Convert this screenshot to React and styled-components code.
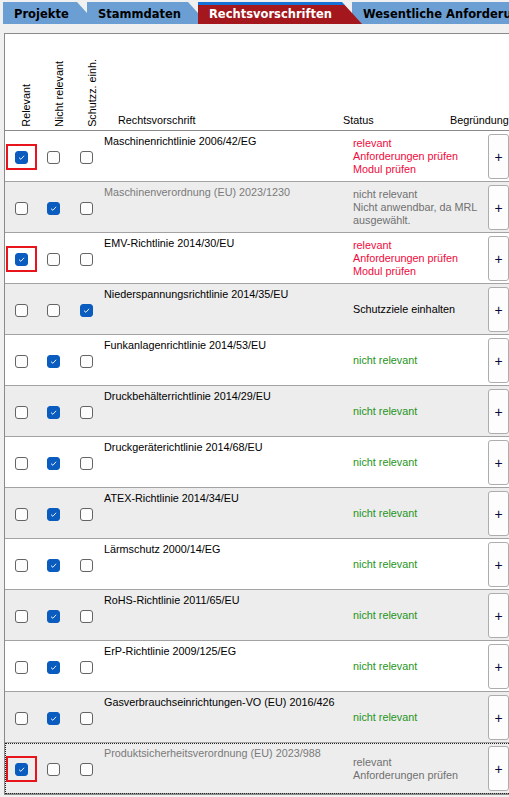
import styled, { createGlobalStyle } from 'styled-components';

const GlobalStyle = createGlobalStyle`
  html, body {
    margin: 0;
    background: #f0f0f0;
    overflow: hidden;
  }
  body {
    font-family: "Liberation Sans", Arial, sans-serif;
    font-size: 10.8px;
    color: #000;
  }
`;

const Page = styled.div`
  width: 640px;
  padding-top: 2px;
`;

const TabStrip = styled.div`
  display: flex;
  padding-left: 3px;
  height: 22px;
`;

const Tab = styled.div`
  position: relative;
  z-index: ${p => (p.$active ? 20 : p.$index)};
  flex: none;
  width: ${p => p.$width}px;
  height: 22px;
  margin-right: -10px;
  padding: 1px 0 0 11px;
  box-sizing: border-box;
  display: flex;
  align-items: center;
  font-family: "DejaVu Sans", Verdana, sans-serif;
  font-weight: bold;
  font-size: 11.5px;
  white-space: nowrap;
  color: ${p => (p.$active ? '#fff' : '#000')};
  background: ${p => (p.$active ? 'linear-gradient(#1672d6 0 3px, #a3171d 3px)' : '#6b9fd3')};
  clip-path: polygon(0 0, calc(100% - 20px) 0, 100% 100%, 0 100%);
`;

const Panel = styled.div`
  margin: 9px 0 0 4px;
  border: 1px solid #8a8a8a;
  background: #fff;
`;

const HeaderRow = styled.div`
  display: grid;
  grid-template-columns: 32px 33px 32px 241px 107px 1fr;
  height: 96px;
  border-bottom: 1px solid #8a8a8a;
`;

const HeaderCell = styled.div`
  display: flex;
  align-items: flex-end;
  padding: 0 0 3px ${p => p.$indent || 0}px;
  line-height: 13px;
  white-space: nowrap;
`;

const VLabel = styled.span`
  writing-mode: vertical-rl;
  transform: rotate(180deg);
  line-height: 13px;
  white-space: nowrap;
`;

const Row = styled.div`
  display: grid;
  grid-template-columns: 32px 33px 32px 249px 135px 1fr;
  height: 50px;
  border-bottom: 1px solid #a3a3a3;
  background: ${p => (p.$shaded ? '#ededed' : '#fff')};
  outline: ${p => (p.$focused ? '1px dotted #222' : 'none')};
  outline-offset: -1px;
`;

const BoxCell = styled.div`
  display: flex;
  align-items: center;
  justify-content: center;
  padding-top: 1px;
`;

const Mark = styled.div`
  display: flex;
  padding: 5px 7px 4px;
  border: 2px solid ${p => (p.$on ? '#e8141c' : 'transparent')};
`;

const Box = styled.span`
  width: 13px;
  height: 13px;
  box-sizing: border-box;
  border-radius: 3px;
  border: 1px solid ${p => (p.$checked ? '#0b5cbf' : '#646464')};
  background: ${p => (p.$checked ? '#0b5cbf' : '#fdfdfd')};
  display: flex;
  align-items: center;
  justify-content: center;

  & > svg {
    width: 11px;
    height: 11px;
  }
`;

const Name = styled.div`
  padding: 4px 0 0 2px;
  line-height: 13px;
  white-space: nowrap;
  color: ${p => (p.$muted ? '#7a7a7a' : '#000')};
`;

const Status = styled.div`
  align-self: center;
  padding: 1px 0 0 2px;
  line-height: 13px;
  white-space: nowrap;
  color: ${p => p.$color};
`;

const ButtonCell = styled.div`
  display: flex;
  padding: 3px 0 2px 2px;
`;

const PlusButton = styled.button`
  width: 21px;
  height: 100%;
  padding: 0;
  border: 1px solid #adadad;
  border-radius: 3px;
  background: #fdfdfd;
  font-family: "Liberation Sans", Arial, sans-serif;
  font-size: 14px;
  color: #0a0a3a;
`;

const tones = {
  red: '#f00a3c',
  green: '#1f9420',
  grey: '#707070',
  black: '#000',
};

const rows = [
  { name: 'Maschinenrichtlinie 2006/42/EG', checks: [1, 0, 0], mark: true, tone: 'red', status: ['relevant', 'Anforderungen prüfen', 'Modul prüfen'] },
  { name: 'Maschinenverordnung (EU) 2023/1230', muted: true, checks: [0, 1, 0], tone: 'grey', status: ['nicht relevant', 'Nicht anwendbar, da MRL', 'ausgewählt.'] },
  { name: 'EMV-Richtlinie 2014/30/EU', checks: [1, 0, 0], mark: true, tone: 'red', status: ['relevant', 'Anforderungen prüfen', 'Modul prüfen'] },
  { name: 'Niederspannungsrichtlinie 2014/35/EU', checks: [0, 0, 1], tone: 'black', status: ['Schutzziele einhalten'] },
  { name: 'Funkanlagenrichtlinie 2014/53/EU', checks: [0, 1, 0], tone: 'green', status: ['nicht relevant'] },
  { name: 'Druckbehälterrichtlinie 2014/29/EU', checks: [0, 1, 0], tone: 'green', status: ['nicht relevant'] },
  { name: 'Druckgeräterichtlinie 2014/68/EU', checks: [0, 1, 0], tone: 'green', status: ['nicht relevant'] },
  { name: 'ATEX-Richtlinie 2014/34/EU', checks: [0, 1, 0], tone: 'green', status: ['nicht relevant'] },
  { name: 'Lärmschutz 2000/14/EG', checks: [0, 1, 0], tone: 'green', status: ['nicht relevant'] },
  { name: 'RoHS-Richtlinie 2011/65/EU', checks: [0, 1, 0], tone: 'green', status: ['nicht relevant'] },
  { name: 'ErP-Richtlinie 2009/125/EG', checks: [0, 1, 0], tone: 'green', status: ['nicht relevant'] },
  { name: 'Gasverbrauchseinrichtungen-VO (EU) 2016/426', checks: [0, 1, 0], tone: 'green', status: ['nicht relevant'] },
  { name: 'Produktsicherheitsverordnung (EU) 2023/988', muted: true, checks: [1, 0, 0], mark: true, tone: 'grey', status: ['relevant', 'Anforderungen prüfen'], shaded: true, focused: true },
];

const Check = ({ checked }) => (
  <Box $checked={checked}>
    {checked && (
      <svg viewBox="0 0 11 11">
        <path d="M3.3 5.9 L4.9 7.3 L7.8 4.1" fill="none" stroke="#fff" strokeWidth="0.9" strokeLinecap="round" strokeLinejoin="round" />
      </svg>
    )}
  </Box>
);

const tabs = [
  { label: 'Projekte', width: 94 },
  { label: 'Stammdaten', width: 121 },
  { label: 'Rechtsvorschriften', width: 164, active: true },
  { label: 'Wesentliche Anforderungen', width: 220 },
];

export default function App() {
  return (
    <Page>
      <GlobalStyle />
      <TabStrip>
        {tabs.map((t, i) => (
          <Tab key={t.label} $index={i + 1} $width={t.width} $active={t.active}>{t.label}</Tab>
        ))}
      </TabStrip>
      <Panel>
        <HeaderRow>
          <HeaderCell $indent={15}><VLabel>Relevant</VLabel></HeaderCell>
          <HeaderCell $indent={16}><VLabel>Nicht relevant</VLabel></HeaderCell>
          <HeaderCell $indent={16}><VLabel>Schutzz. einh.</VLabel></HeaderCell>
          <HeaderCell $indent={16}>Rechtsvorschrift</HeaderCell>
          <HeaderCell>Status</HeaderCell>
          <HeaderCell>Begründung</HeaderCell>
        </HeaderRow>
        {rows.map((r, i) => (
          <Row key={r.name} $shaded={r.shaded || i % 2 === 1} $focused={r.focused}>
            {r.checks.map((c, j) => (
              <BoxCell key={j}>
                <Mark $on={j === 0 && r.mark}>
                  <Check checked={!!c} />
                </Mark>
              </BoxCell>
            ))}
            <Name $muted={r.muted}>{r.name}</Name>
            <Status $color={tones[r.tone]}>
              {r.status.map(s => <div key={s}>{s}</div>)}
            </Status>
            <ButtonCell>
              <PlusButton>+</PlusButton>
            </ButtonCell>
          </Row>
        ))}
      </Panel>
    </Page>
  );
}
